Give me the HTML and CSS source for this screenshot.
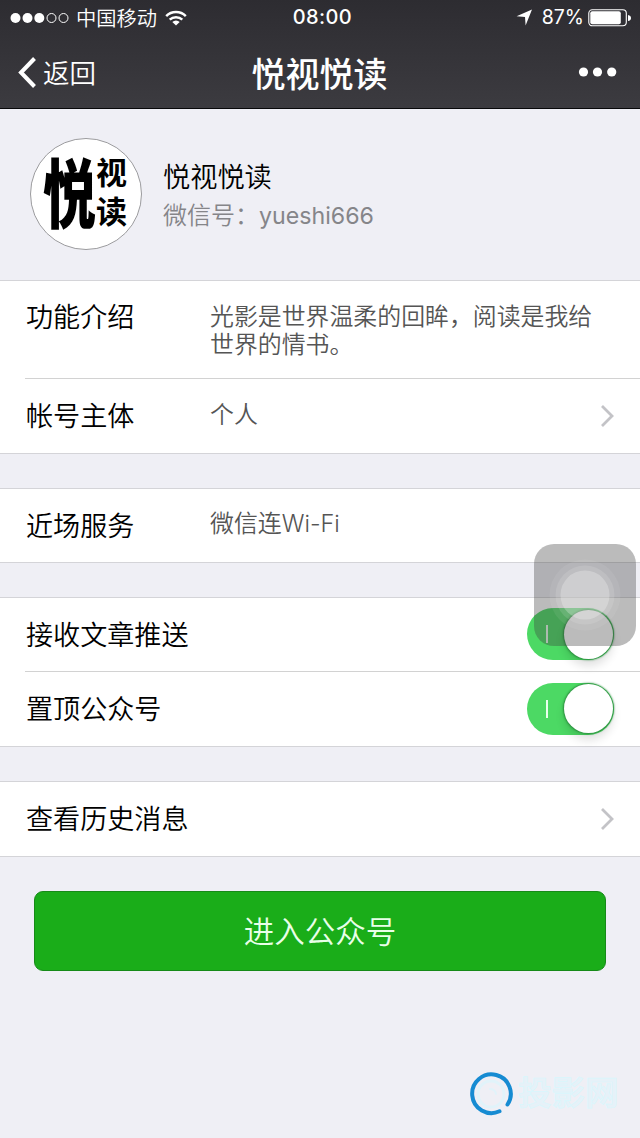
FILE: index.html
```html
<!DOCTYPE html>
<html lang="zh-CN">
<head>
<meta charset="utf-8">
<title>悦视悦读</title>
<link rel="stylesheet" href="styles.css">
</head>
<body>
<div class="screen">
  <header class="top">
    <div class="status">
      <div class="status-left">
        <svg class="signal" width="60" height="12" viewBox="0 0 60 12"><g fill="#fff"><circle cx="5.500" cy="6" r="5"/><circle cx="17.500" cy="6" r="5"/><circle cx="29.300" cy="6" r="5"/></g><g fill="none" stroke="#fff" stroke-width="1"><circle cx="41.500" cy="6" r="4.500"/><circle cx="53.500" cy="6" r="4.500"/></g></svg>
        <span class="carrier">中国移动</span>
        <svg class="wifi" width="22" height="16" viewBox="0 0 22 16"><g fill="none" stroke="#fff" stroke-width="2.500"><path d="M1.200 6.100a14 14 0 0 1 19.600 0"/><path d="M4.700 9.700a9 9 0 0 1 12.600 0"/></g><path fill="#fff" d="M11 15.600 7.300 11.900a5.300 5.300 0 0 1 7.400 0z"/></svg>
      </div>
      <span class="clock">08:00</span>
      <div class="status-right">
        <svg width="17" height="17" viewBox="0 0 17 17"><path fill="#fff" d="M16 .5 9.600 16.500 9 8 .6 7.300z"/></svg>
        <span class="percent">87%</span>
        <svg class="battery" width="44" height="18" viewBox="0 0 44 18"><rect x=".8" y=".8" width="37.500" height="16" rx="3.500" fill="none" stroke="#fff" stroke-width="1.100"/><rect x="2.300" y="2.300" width="30.500" height="13" rx="2" fill="#fff"/><path fill="#fff" d="M40 6q3 .5 3 3t-3 3z"/></svg>
      </div>
    </div>
    <nav class="nav">
      <div class="back">
        <svg width="20" height="32" viewBox="0 0 20 32"><path d="M18.500 1.500 5 15.500l13.500 14" fill="none" stroke="#fff" stroke-width="4"/></svg>
        <span>返回</span>
      </div>
      <h1 class="title">悦视悦读</h1>
      <svg class="more" width="40" height="10" viewBox="0 0 40 10"><g fill="#fff"><circle cx="5.500" cy="5" r="4.600"/><circle cx="19.500" cy="5" r="4.600"/><circle cx="33.700" cy="5" r="4.600"/></g></svg>
    </nav>
  </header>

  <section class="profile">
    <div class="avatar">
      <div class="logo-main"><span>悦</span></div>
      <div class="logo-side"><span>视</span><span>读</span></div>
    </div>
    <div class="identity">
      <div class="name">悦视悦读</div>
      <div class="wechat-id">微信号：<span class="latin">yueshi666</span></div>
    </div>
  </section>

  <section class="group">
    <div class="row intro"><span class="label">功能介绍</span><span class="value">光影是世界温柔的回眸，阅读是我给世界的情书。</span></div>
    <div class="row divided"><span class="label">帐号主体</span><span class="value">个人</span><svg class="chevron" width="15" height="24" viewBox="0 0 15 24"><path d="m2 2 10 10L2 22"/></svg></div>
  </section>

  <section class="group">
    <div class="row"><span class="label">近场服务</span><span class="value">微信连<span class="wifi-text">Wi-Fi</span></span></div>
  </section>

  <section class="group">
    <div class="row"><span class="label">接收文章推送</span><span class="toggle"><i class="on-mark"></i><i class="knob"></i></span></div>
    <div class="row divided"><span class="label">置顶公众号</span><span class="toggle"><i class="on-mark"></i><i class="knob"></i></span></div>
  </section>

  <section class="group history">
    <div class="row"><span class="label">查看历史消息</span><svg class="chevron" width="15" height="24" viewBox="0 0 15 24"><path d="m2 2 10 10L2 22"/></svg></div>
  </section>

  <button class="enter">进入公众号</button>

  <div class="watermark">
    <svg width="44" height="44" viewBox="0 0 44 44"><g fill="none" stroke-linecap="round"><path d="M38.500 32.500A19.300 19.300 0 1 0 30.500 39.300" stroke="#168bd2" stroke-width="4"/><circle cx="22" cy="22" r="13" stroke="#e1f3fa" stroke-width="3"/><path d="M21 17q5 0 6 5" stroke="#e1f3fa" stroke-width="2"/></g></svg>
    <span>投影网</span>
  </div>

  <div class="assist">
    <svg width="102" height="102" viewBox="0 0 102 102"><g fill="#fff"><circle cx="51" cy="51" r="35.500" fill-opacity=".07"/><circle cx="51" cy="51" r="29.500" fill-opacity=".12"/><circle cx="51" cy="51" r="24.500" fill-opacity=".25"/></g></svg>
  </div>
</div>
</body>
</html>
```
FILE: styles.css
```css
* { box-sizing: border-box; }
body {
  margin: 0;
  font-family: "Noto Sans CJK SC DemiLight", "Noto Sans CJK SC", sans-serif;
  font-weight: 350;
  color: #000;
}
svg { display: block; flex: none; }
.screen {
  position: relative;
  width: 640px;
  height: 1138px;
  overflow: hidden;
  background: #efeff5;
  display: flex;
  flex-direction: column;
}

/* Status and navigation bars */
.top {
  height: 109px;
  flex: none;
  color: #fff;
  background: linear-gradient(#2d2c31, #3c3b40);
  border-bottom: 1px solid #08080a;
}
.status {
  height: 35px;
  display: grid;
  grid-template-columns: 1fr auto 1fr;
  align-items: center;
  padding: 0 8px 0 10px;
}
.status-left, .status-right { display: flex; align-items: center; }
.status-right { justify-content: flex-end; }
.carrier { font-size: 20.300px; line-height: 32px; margin: 0 0 2px 6px; }
.wifi { margin-left: 8px; }
.clock { font: 500 20px/35px Inter, sans-serif; letter-spacing: .4px; padding-left: 3px; }
.percent { font: 400 19.500px/35px Inter, sans-serif; margin: 0 4px 0 9px; }
.nav {
  height: 73px;
  display: grid;
  grid-template-columns: 1fr auto 1fr;
  align-items: center;
  padding: 0 22px 0 16px;
}
.back { display: flex; align-items: center; gap: 7px; font-size: 26.500px; line-height: 73px; }
.back span { padding-bottom: 2px; }
.title { margin: 0 0 0 5px; font-family: "Noto Sans CJK SC", sans-serif; font-size: 34px; font-weight: 500; line-height: 73px; }
.more { justify-self: end; margin-bottom: 2px; }

/* Profile */
.profile {
  height: 171px;
  flex: none;
  display: flex;
  align-items: center;
  padding: 0 30px 2px;
  gap: 21px;
}
.avatar {
  width: 112px;
  height: 112px;
  border: 1px solid #9b9b9e;
  border-radius: 50%;
  background: #fff;
  display: flex;
  align-items: center;
  padding: 0 0 6px 12px;
  font-family: "Noto Sans CJK SC", sans-serif;
  font-weight: 900;
}
.logo-main { width: 53px; height: 76px; display: flex; align-items: center; justify-content: center; }
.logo-main span { font-size: 53px; line-height: 53px; transform: scaleY(1.420); }
.logo-side { display: flex; flex-direction: column; gap: 7px; }
.logo-side span { font-size: 31px; line-height: 32px; font-weight: 700; }
.identity { padding-top: 3px; }
.name { font-size: 27.200px; line-height: 40px; }
.wechat-id { font-size: 24px; line-height: 38px; color: #858589; }
.latin { font: 400 23.200px/38px Inter, sans-serif; }

/* List groups */
.group {
  flex: none;
  background: #fff;
  border-top: 1px solid #d4d4d8;
  border-bottom: 1px solid #d4d4d8;
  margin-bottom: 34px;
}
.row {
  height: 73px;
  display: flex;
  align-items: center;
  padding: 0 26px 1px;
}
.divided { height: 75px; position: relative; padding-bottom: 0; }
.divided::before {
  content: "";
  position: absolute;
  left: 25px;
  right: 0;
  top: 0;
  height: 1px;
  background: #d2d2d2;
}
.history .row { height: 74px; }
.label { width: 184px; flex: none; font-size: 27.100px; line-height: 40px; white-space: nowrap; }
.divided .label, .history .label { padding-bottom: 1px; }
.value { font-size: 23.900px; line-height: 28px; color: #555; padding-bottom: 5px; flex: 1; }
.intro { height: 97px; align-items: flex-start; padding-top: 15px; }
.intro .value { padding-top: 5px; margin-right: 10px; }
.wifi-text { font: 300 23.500px/28px Inter, sans-serif; }
.chevron { margin-left: auto; margin-right: -1px; fill: none; stroke: #c3c3c7; stroke-width: 2.800px; }
.toggle {
  width: 87px;
  height: 52px;
  margin-left: auto;
  border-radius: 26px;
  background: #4cd964;
  display: flex;
  align-items: center;
  justify-content: space-between;
  padding: 0 1px 0 19px;
}
.on-mark { width: 2px; height: 18px; background: #e9ffed; }
.knob { width: 49px; height: 49px; border-radius: 50%; background: #fff; box-shadow: 0 0 2px 1px #298b3c, 0 7px 10px rgba(0,0,0,.12); }

/* Primary action */
.enter {
  flex: none;
  height: 80px;
  margin: 0 34px;
  padding: 0;
  border: 1px solid #168a18;
  border-radius: 9px;
  background: #1aad19;
  color: #e9ffe9;
  font: 350 30.500px/76px "Noto Sans CJK SC DemiLight", "Noto Sans CJK SC", sans-serif;
  padding-bottom: 2px;
}

/* Floating overlays */
.watermark {
  position: absolute;
  left: 469px;
  top: 1072px;
  display: flex;
  align-items: center;
  gap: 5px;
  font-size: 33.500px;
  line-height: 38px;
  font-weight: 700;
  font-family: "Noto Sans CJK SC", sans-serif;
  color: #e6f1f8;
  -webkit-text-stroke: .7px #d9f7fd;
}
.watermark span { padding-bottom: 6px; }
.assist {
  position: absolute;
  left: 534px;
  top: 544px;
  width: 102px;
  height: 102px;
  border-radius: 20px;
  background: rgba(60,60,60,.35);
}
```
